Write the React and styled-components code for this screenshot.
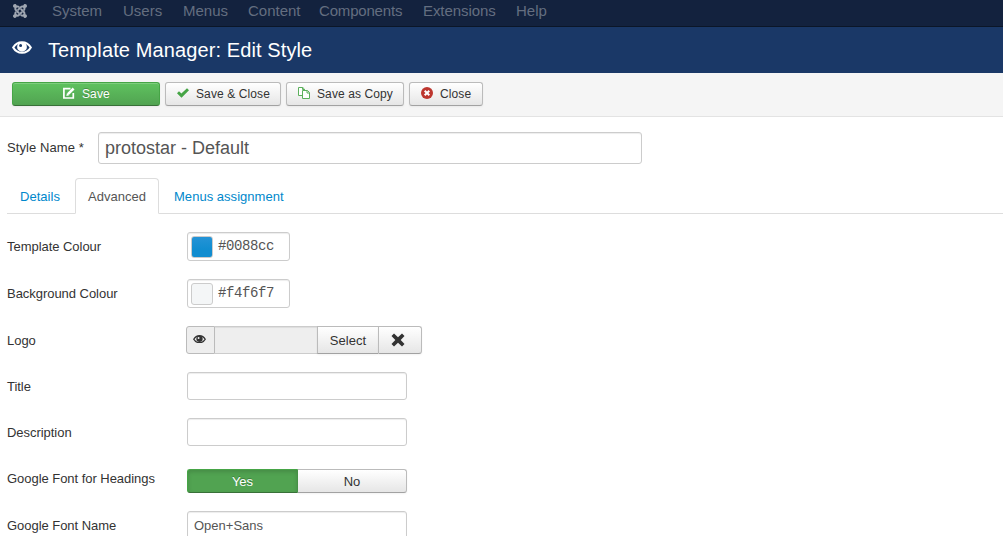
import React from "react";
import styled, { createGlobalStyle, css } from "styled-components";
import { FaJoomla } from "react-icons/fa";

const GlobalStyle = createGlobalStyle`
  * { box-sizing: border-box; }
  body {
    margin: 0;
    background: #fff;
    color: #333;
    font: 13px/18px "Liberation Sans", Arial, sans-serif;
    overflow: hidden;
  }
  button, input { font-family: inherit; margin: 0; outline: none; }
`;

const Page = styled.div`
  height: 536px;
  overflow: hidden;
`;

const Navbar = styled.nav`
  display: flex;
  align-items: flex-start;
  height: 27px;
  padding-left: 12px;
  background: #13223e;
  border-bottom: 1px solid #0b1628;
  color: #646e80;
`;

const Brand = styled.div`
  display: flex;
  width: 40px;
  padding-top: 3px;
  color: #a0a7b2;
`;

const NavItem = styled.a`
  width: ${(p) => p.$width}px;
  flex: none;
  font-size: 15px;
  line-height: 22px;
  letter-spacing: ${(p) => p.$spacing || 0}px;
  white-space: nowrap;
`;

const Header = styled.header`
  display: flex;
  height: 46px;
  padding-left: 12px;
  background: #1a3867;
  color: #fff;

  svg { margin-top: 14px; }
`;

const PageTitle = styled.h1`
  margin: 0 0 0 16px;
  font-size: 20px;
  font-weight: normal;
  letter-spacing: 0.11px;
  line-height: 46px;
`;

const Toolbar = styled.div`
  display: flex;
  gap: 5px;
  height: 44px;
  padding: 9px 12px 0;
  background: #f5f5f5;
  border-bottom: 1px solid #e3e3e3;
`;

const raised = css`
  border: 1px solid #bbb;
  border-bottom-color: #a2a2a2;
  background: linear-gradient(#fff, #e6e6e6);
  box-shadow: inset 0 1px 0 rgba(255, 255, 255, 0.2), 0 1px 2px rgba(0, 0, 0, 0.05);
  color: #333;
`;

const ToolButton = styled.button`
  ${raised}
  display: flex;
  align-items: center;
  gap: 7px;
  width: ${(p) => p.$width}px;
  height: 24px;
  padding: 0 0 0 11px;
  border-radius: 3px;
  font-size: 12px;
  letter-spacing: 0.1px;
  line-height: 22px;
  white-space: nowrap;

  svg { margin-bottom: 2px; }

  ${(p) => p.$primary && css`
    padding-left: 50px;
    border-color: #46a546 #46a546 #387038;
    background: linear-gradient(#5fc25f, #51a351);
    color: #fff;
    text-shadow: 0 -1px 0 rgba(0, 0, 0, 0.25);
  `}
`;

const Main = styled.main`
  padding: 15px 0 0 7px;
`;

const TitleRow = styled.div`
  display: flex;
  align-items: center;
`;

const TitleLabel = styled.label`
  width: 91px;
  letter-spacing: 0.08px;
`;

const TextInput = styled.input`
  display: block;
  width: ${(p) => p.$width || 220}px;
  height: ${(p) => (p.$large ? 32 : 28)}px;
  padding: 0 6px;
  border: 1px solid #ccc;
  border-radius: 3px;
  background: #fff;
  box-shadow: inset 0 1px 1px rgba(0, 0, 0, 0.075);
  color: #555;
  font-size: ${(p) => (p.$large ? 18 : 13)}px;
`;

const Tabs = styled.div`
  display: flex;
  height: 36px;
  margin-top: 14px;
  border-bottom: 1px solid #ddd;
`;

const Tab = styled.a`
  height: 36px;
  margin-right: 2px;
  padding: 9px 12px 8px;
  border: 1px solid transparent;
  border-radius: 4px 4px 0 0;
  color: #08c;
  letter-spacing: 0.03px;
  white-space: nowrap;

  ${(p) => p.$active && css`
    border-color: #ddd #ddd #fff;
    background: #fff;
    color: #555;
  `}
`;

const Fields = styled.div`
  display: flex;
  flex-direction: column;
  gap: 18px;
  padding-top: 18px;
`;

const Field = styled.div`
  display: flex;
  align-items: flex-start;
`;

const FieldLabel = styled.label`
  width: 180px;
  padding-top: 6px;
  letter-spacing: -0.04px;
`;

const ColorBox = styled.div`
  display: flex;
  width: 103px;
  height: 29px;
  padding: 3px;
  border: 1px solid #ccc;
  border-radius: 3px;
  box-shadow: inset 0 1px 1px rgba(0, 0, 0, 0.075);
  color: #555;
  font: 14px/20px "Liberation Mono", monospace;
  letter-spacing: -0.4px;
`;

const Swatch = styled.span`
  width: 22px;
  height: 22px;
  margin-right: 5px;
  border: 1px solid #ccc;
  border-radius: 3px;
  background: ${(p) => p.$fill};
`;

const MediaGroup = styled.div`
  display: flex;
  width: 236px;
  height: 28px;
  margin-left: -1px;
`;

const Preview = styled.span`
  display: flex;
  width: 29px;
  padding: 8px 0 0 6px;
  border: 1px solid #bbb;
  border-radius: 3px 0 0 3px;
  background: #eee;
`;

const MediaPath = styled.span`
  width: 102px;
  border: solid #ccc;
  border-width: 1px 0;
  background: #eee;
  box-shadow: inset 0 1px 1px rgba(0, 0, 0, 0.075);
`;

const MediaButton = styled.button`
  ${raised}
  display: flex;
  align-items: center;
  justify-content: center;
  width: ${(p) => p.$width}px;
  padding: 0 ${(p) => (p.$last ? 4 : 0)}px 0 0;
  border-radius: ${(p) => (p.$last ? "0 3px 3px 0" : "0")};
  border-right-width: ${(p) => (p.$last ? 1 : 0)}px;
  font-size: 13px;
  letter-spacing: 0.08px;
`;

const Switch = styled.div`
  display: flex;
  width: 220px;
  height: 24px;
  margin: 5px 0 0;
`;

const SwitchOption = styled.button`
  ${raised}
  width: 109px;
  padding: 2px 0 0;
  border-left-width: 0;
  border-radius: 0 3px 3px 0;
  font-size: 13px;
  line-height: 20px;

  ${(p) => p.$on && css`
    width: 111px;
    border: 1px solid #46a546;
    border-right-color: #489348;
    border-bottom-color: #387038;
    border-radius: 3px 0 0 3px;
    background: #51a351;
    box-shadow: inset 0 2px 4px rgba(0, 0, 0, 0.15);
    color: #fff;
    text-shadow: 0 -1px 0 rgba(0, 0, 0, 0.25);
  `}
`;

const EyeIcon = ({ width }) => (
  <svg width={width} height={width * 0.65} viewBox="0 0 20 13">
    <path
      d="M1.200 6.500C3.200 3 6.300 1.200 10 1.200s6.800 1.800 8.800 5.300C16.800 10 13.700 11.800 10 11.800S3.200 10 1.200 6.500Z"
      fill="none"
      stroke="currentColor"
      strokeWidth="2.100"
    />
    <path
      fill="currentColor"
      fillRule="evenodd"
      d="M10 1A4.900 4.900 0 1 1 10 10.800A4.900 4.900 0 0 1 10 1ZM8.600 3a1.500 1.500 0 1 0 0 3a1.500 1.500 0 0 0 0-3Z"
    />
  </svg>
);

const EditIcon = () => (
  <svg width="12" height="12" viewBox="0 0 12 12" fill="none" stroke="currentColor">
    <path d="M7.500 1.600H.9V11H10.300V6" strokeWidth="1.700" />
    <path d="M5 7.200 10.600 1.500" strokeWidth="2.500" />
    <path d="M3.300 8.900 4 5.900 6.300 8.200Z" fill="currentColor" stroke="none" />
  </svg>
);

const CheckIcon = () => (
  <svg width="12" height="10" viewBox="0 0 12 10">
    <path d="M0 5.300 2 3.300 4.400 5.600 10 .3 12 2.200 4.500 9.700Z" fill="#46a546" />
  </svg>
);

const CopyIcon = () => (
  <svg width="12" height="12" viewBox="0 0 12 12" fill="#fff" stroke="#5cb05c">
    <path d="M.5 .5H4.800L6.500 2.200V8.500H.5ZM4.500 .5V2.500H6.500" />
    <path d="M4.500 3.500H9.500L11.500 5.500V11.500H4.500ZM9 3.500V6H11.500" />
  </svg>
);

const CancelIcon = () => (
  <svg width="12" height="12" viewBox="0 0 12 12">
    <circle cx="6" cy="6" r="6" fill="#bd362f" />
    <path d="M3.700 3.700 8.300 8.300M8.300 3.700 3.700 8.300" stroke="#fff" strokeWidth="2" />
  </svg>
);

const RemoveIcon = () => (
  <svg width="14" height="14" viewBox="0 0 14 14">
    <path
      d="M3 .5 7 4.300 11 .5 13.500 3 9.700 7 13.500 11 11 13.500 7 9.700 3 13.500 .5 11 4.300 7 .5 3Z"
      fill="#333"
    />
  </svg>
);

const navItems = [
  ["System", 71],
  ["Users", 60],
  ["Menus", 65],
  ["Content", 71],
  ["Components", 104, -0.18],
  ["Extensions", 93, -0.08],
  ["Help", 40],
];

export default function App() {
  return (
    <Page>
      <GlobalStyle />
      <Navbar>
        <Brand><FaJoomla size={16} /></Brand>
        {navItems.map(([name, width, spacing]) => (
          <NavItem key={name} $width={width} $spacing={spacing}>{name}</NavItem>
        ))}
      </Navbar>
      <Header>
        <EyeIcon width={20} />
        <PageTitle>Template Manager: Edit Style</PageTitle>
      </Header>
      <Toolbar>
        <ToolButton $primary $width={148}><EditIcon />Save</ToolButton>
        <ToolButton $width={116}><CheckIcon />Save &amp; Close</ToolButton>
        <ToolButton $width={118}><CopyIcon />Save as Copy</ToolButton>
        <ToolButton $width={74}><CancelIcon />Close</ToolButton>
      </Toolbar>
      <Main>
        <TitleRow>
          <TitleLabel>Style Name *</TitleLabel>
          <TextInput $large $width={544} defaultValue="protostar - Default" />
        </TitleRow>
        <Tabs>
          <Tab>Details</Tab>
          <Tab $active>Advanced</Tab>
          <Tab>Menus assignment</Tab>
        </Tabs>
        <Fields>
          <Field>
            <FieldLabel>Template Colour</FieldLabel>
            <ColorBox><Swatch $fill="linear-gradient(#2593d6, #118dd0 60%)" />#0088cc</ColorBox>
          </Field>
          <Field>
            <FieldLabel>Background Colour</FieldLabel>
            <ColorBox><Swatch $fill="#f4f6f7" />#f4f6f7</ColorBox>
          </Field>
          <Field>
            <FieldLabel>Logo</FieldLabel>
            <MediaGroup>
              <Preview><EyeIcon width={13} /></Preview>
              <MediaPath />
              <MediaButton $width={61}>Select</MediaButton>
              <MediaButton $width={44} $last><RemoveIcon /></MediaButton>
            </MediaGroup>
          </Field>
          <Field>
            <FieldLabel>Title</FieldLabel>
            <TextInput />
          </Field>
          <Field>
            <FieldLabel>Description</FieldLabel>
            <TextInput />
          </Field>
          <Field>
            <FieldLabel>Google Font for Headings</FieldLabel>
            <Switch>
              <SwitchOption $on>Yes</SwitchOption>
              <SwitchOption>No</SwitchOption>
            </Switch>
          </Field>
          <Field>
            <FieldLabel>Google Font Name</FieldLabel>
            <TextInput defaultValue="Open+Sans" />
          </Field>
        </Fields>
      </Main>
    </Page>
  );
}
